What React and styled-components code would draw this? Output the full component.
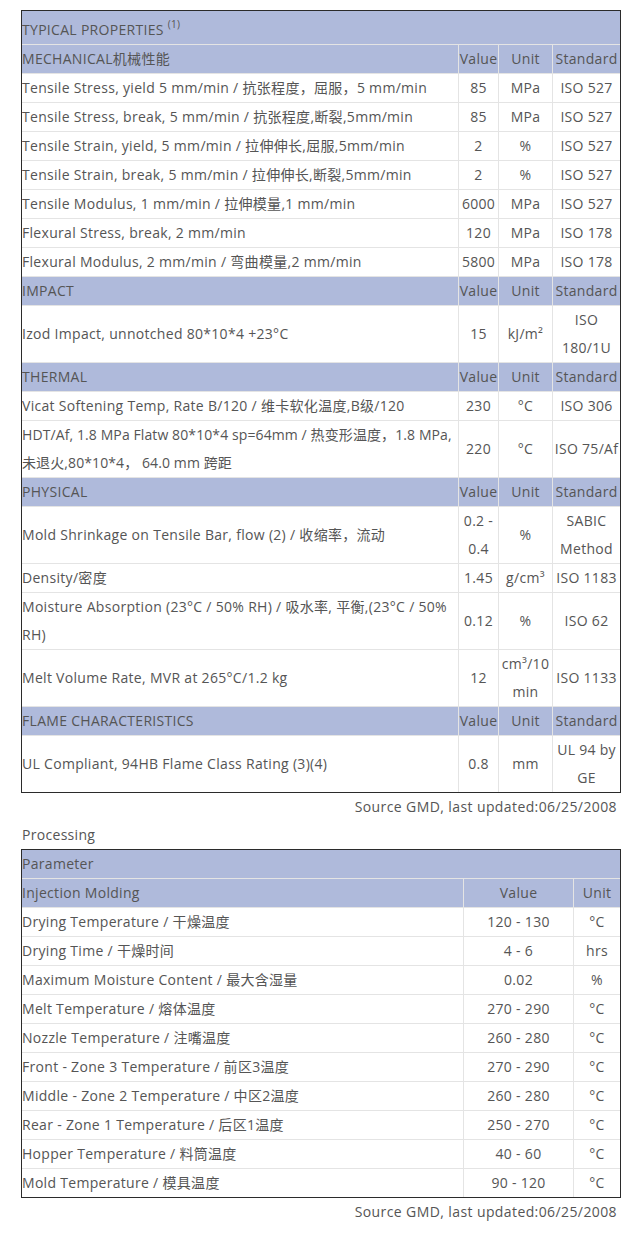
import React from "react";
import styled, { createGlobalStyle } from "styled-components";

const Global = createGlobalStyle`
  html, body { margin: 0; padding: 0; background: #fff; }
  body {
    font-family: "Open Sans", "Noto Sans CJK SC", sans-serif;
    font-size: 14px;
    line-height: 28px;
    letter-spacing: 0.3px;
    color: #555555;
  }
`;

const Page = styled.div`
  padding: 10px 2px 16px 21px;
  width: 598px;
`;

const Table = styled.table`
  width: 598px;
  table-layout: fixed;
  border-collapse: separate;
  border-spacing: 0;
  border: 1px solid #2b2b2b;
  font-size: 14px;
  line-height: 28px;
  tr:last-child > td { border-bottom: none; }
  td:last-child { border-right: none; }
`;

const Row = styled.tr`
  background: ${(p) => (p.$head ? "#afbadb" : "#fff")};
`;

const Cell = styled.td`
  padding: 0;
  border-right: 1px solid #e4e4e4;
  border-bottom: 1px solid #e4e4e4;
  text-align: ${(p) => (p.$center ? "center" : "left")};
  letter-spacing: ${(p) => (p.$tight ? "0.1px" : "inherit")};
  vertical-align: middle;
  word-wrap: break-word;
  font-weight: 400;
`;

const Title = styled(Cell)`
  padding: 5px 0 0 0;
`;

const Sup = styled.sup`
  font-size: 10px;
  line-height: 0;
  vertical-align: 7px;
`;

const Note = styled.div`
  text-align: right;
  padding-right: 2px;
  letter-spacing: 0.4px;
`;

const Caption = styled.div`
  padding-left: 1px;
`;

const props = [
  {
    head: "MECHANICAL机械性能",
    rows: [
      ["Tensile Stress, yield 5 mm/min / 抗张程度，屈服，5 mm/min", "85", "MPa", "ISO 527"],
      ["Tensile Stress, break, 5 mm/min / 抗张程度,断裂,5mm/min", "85", "MPa", "ISO 527"],
      ["Tensile Strain, yield, 5 mm/min / 拉伸伸长,屈服,5mm/min", "2", "%", "ISO 527"],
      ["Tensile Strain, break, 5 mm/min / 拉伸伸长,断裂,5mm/min", "2", "%", "ISO 527"],
      ["Tensile Modulus, 1 mm/min / 拉伸模量,1 mm/min", "6000", "MPa", "ISO 527"],
      ["Flexural Stress, break, 2 mm/min", "120", "MPa", "ISO 178"],
      ["Flexural Modulus, 2 mm/min / 弯曲模量,2 mm/min", "5800", "MPa", "ISO 178"],
    ],
  },
  {
    head: "IMPACT",
    rows: [["Izod Impact, unnotched 80*10*4 +23°C", "15", <>kJ/m²</>, "ISO 180/1U"]],
  },
  {
    head: "THERMAL",
    rows: [
      ["Vicat Softening Temp, Rate B/120 / 维卡软化温度,B级/120", "230", "°C", "ISO 306"],
      ["HDT/Af, 1.8 MPa Flatw 80*10*4 sp=64mm / 热变形温度，1.8 MPa, 未退火,80*10*4， 64.0 mm 跨距", "220", "°C", "ISO 75/Af", true],
    ],
  },
  {
    head: "PHYSICAL",
    rows: [
      ["Mold Shrinkage on Tensile Bar, flow (2) / 收缩率，流动", "0.2 - 0.4", "%", "SABIC Method"],
      ["Density/密度", "1.45", "g/cm³", "ISO 1183"],
      ["Moisture Absorption (23°C / 50% RH) / 吸水率, 平衡,(23°C / 50% RH)", "0.12", "%", "ISO 62"],
      ["Melt Volume Rate, MVR at 265°C/1.2 kg", "12", "cm³/10 min", "ISO 1133"],
    ],
  },
  {
    head: "FLAME CHARACTERISTICS",
    rows: [["UL Compliant, 94HB Flame Class Rating (3)(4)", "0.8", "mm", "UL 94 by GE"]],
  },
];

const processing = [
  ["Drying Temperature / 干燥温度", "120 - 130", "°C"],
  ["Drying Time / 干燥时间", "4 - 6", "hrs"],
  ["Maximum Moisture Content / 最大含湿量", "0.02", "%"],
  ["Melt Temperature / 熔体温度", "270 - 290", "°C"],
  ["Nozzle Temperature / 注嘴温度", "260 - 280", "°C"],
  ["Front - Zone 3 Temperature / 前区3温度", "270 - 290", "°C"],
  ["Middle - Zone 2 Temperature / 中区2温度", "260 - 280", "°C"],
  ["Rear - Zone 1 Temperature / 后区1温度", "250 - 270", "°C"],
  ["Hopper Temperature / 料筒温度", "40 - 60", "°C"],
  ["Mold Temperature / 模具温度", "90 - 120", "°C"],
];

export default function App() {
  return (
    <>
      <Global />
      <Page>
        <Table>
          <colgroup>
            <col style={{ width: 437 }} />
            <col style={{ width: 40 }} />
            <col style={{ width: 54 }} />
            <col style={{ width: 67 }} />
          </colgroup>
          <tbody>
            <Row $head>
              <Title colSpan={4}>
                TYPICAL PROPERTIES <Sup>(1)</Sup>
              </Title>
            </Row>
            {props.map((g) => (
              <React.Fragment key={g.head}>
                <Row $head>
                  <Cell>{g.head}</Cell>
                  <Cell $center>Value</Cell>
                  <Cell $center>Unit</Cell>
                  <Cell $center>Standard</Cell>
                </Row>
                {g.rows.map((r, i) => (
                  <Row key={i}>
                    <Cell $tight={r[4]}>{r[0]}</Cell>
                    <Cell $center>{r[1]}</Cell>
                    <Cell $center>{r[2]}</Cell>
                    <Cell $center>{r[3]}</Cell>
                  </Row>
                ))}
              </React.Fragment>
            ))}
          </tbody>
        </Table>
        <Note>Source GMD, last updated:06/25/2008</Note>
        <Caption>Processing</Caption>
        <Table>
          <colgroup>
            <col style={{ width: 442 }} />
            <col style={{ width: 110 }} />
            <col style={{ width: 46 }} />
          </colgroup>
          <tbody>
            <Row $head>
              <Cell colSpan={3}>Parameter</Cell>
            </Row>
            <Row $head>
              <Cell>Injection Molding</Cell>
              <Cell $center>Value</Cell>
              <Cell $center>Unit</Cell>
            </Row>
            {processing.map((r, i) => (
              <Row key={i}>
                <Cell>{r[0]}</Cell>
                <Cell $center>{r[1]}</Cell>
                <Cell $center>{r[2]}</Cell>
              </Row>
            ))}
          </tbody>
        </Table>
        <Note>Source GMD, last updated:06/25/2008</Note>
      </Page>
    </>
  );
}
